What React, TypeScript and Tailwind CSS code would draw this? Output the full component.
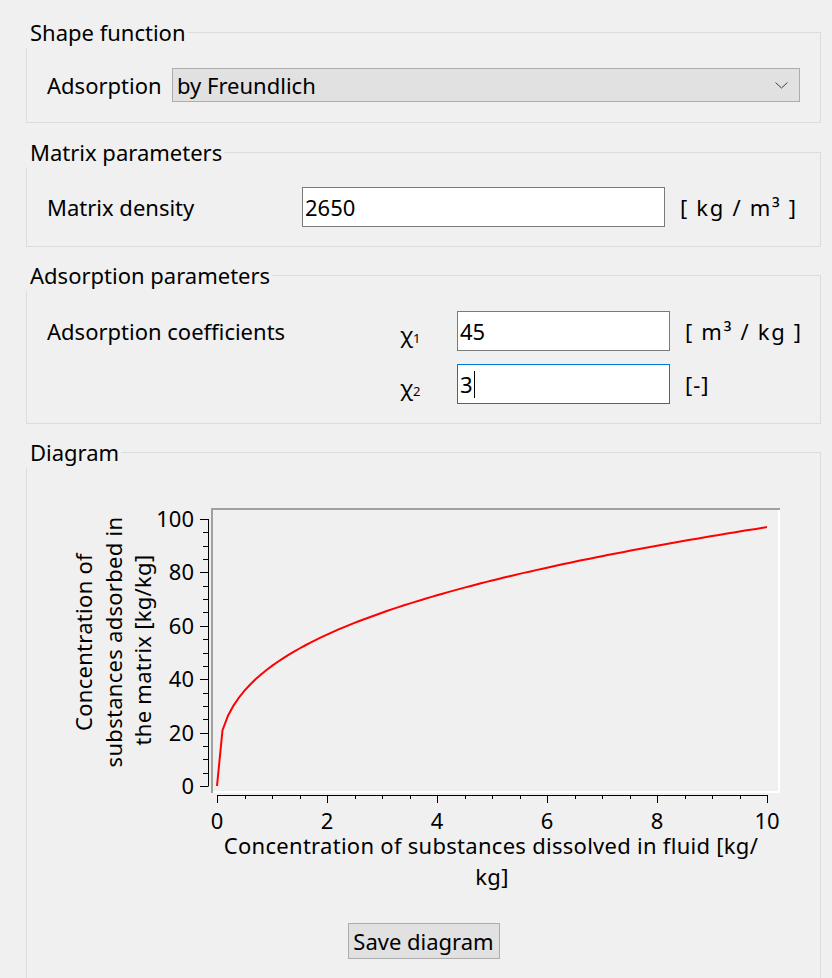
import React from "react";

// coordinates of the plot, in page pixels (the svg viewBox uses page coordinates)
const px = (c: number) => 217 + c * 55;
const py = (q: number) => 786 - q * 2.67;

function Group({ title, className = "", children }: { title: string; className?: string; children: React.ReactNode }) {
  return (
    <fieldset className={`border border-[#dcdcdc] ${className}`}>
      <legend className="-ml-px bg-[#f0f0f0] pl-[4px] pr-[2px] leading-8">{title}</legend>
      {children}
    </fieldset>
  );
}

function Chi({ n }: { n: number }) {
  return (
    <span className="flex items-baseline">
      <span>χ</span>
      <span className="text-[13px]">{n}</span>
    </span>
  );
}

function Diagram() {
  const points: string[] = [];
  for (let i = 0; i <= 100; i++) {
    const c = i / 10;
    points.push(`${px(c).toFixed(1)},${py(45 * Math.cbrt(c)).toFixed(1)}`);
  }

  const yTicks: number[] = [];
  for (let q = 0; q <= 100; q += 5) yTicks.push(q);
  const xTicks: number[] = [];
  for (let c = 0; c <= 10; c += 0.5) xTicks.push(c);

  return (
    <svg width="793" height="440" viewBox="27 468 793 440" className="block" fontFamily="'Noto Sans', sans-serif" fontSize="22">
      {/* sunken frame */}
      <rect x="211" y="508" width="569" height="2" fill="#a0a0a0" />
      <rect x="211" y="508" width="2" height="285" fill="#a0a0a0" />
      <rect x="778" y="510" width="2" height="283" fill="#ffffff" />
      <rect x="213" y="791" width="567" height="2" fill="#ffffff" />

      {/* y axis */}
      <line x1="208.5" y1={py(100)} x2="208.5" y2={py(0)} stroke="#000" strokeWidth="1" />
      {yTicks.map(q => (
        <line key={q} x1={q % 20 === 0 ? 200 : 203} y1={Math.round(py(q)) + 0.5} x2="208.5" y2={Math.round(py(q)) + 0.5} stroke="#000" strokeWidth="1" />
      ))}
      {[0, 20, 40, 60, 80, 100].map(q => (
        <text key={q} x="194" y={py(q) + 8} textAnchor="end" fill="#000">{q}</text>
      ))}

      {/* x axis */}
      <line x1={px(0)} y1="795.5" x2={px(10)} y2="795.5" stroke="#000" strokeWidth="1" />
      {xTicks.map(c => (
        <line key={c} x1={Math.round(px(c)) + 0.5} y1="795" x2={Math.round(px(c)) + 0.5} y2={c % 2 === 0 ? 803 : 799} stroke="#000" strokeWidth="1" />
      ))}
      {[0, 2, 4, 6, 8, 10].map(c => (
        <text key={c} x={px(c)} y="829" textAnchor="middle" fill="#000">{c}</text>
      ))}

      {/* curve */}
      <polyline points={points.join(" ")} fill="none" stroke="#ff0000" strokeWidth="2" />

      {/* axis titles */}
      <g letterSpacing="0.28">
        <text x="491" y="854" textAnchor="middle" fill="#000">Concentration of substances dissolved in fluid [kg/</text>
        <text x="492" y="885" textAnchor="middle" fill="#000">kg]</text>

        <text transform="translate(92,642) rotate(-90)" textAnchor="middle" fill="#000">Concentration of</text>
        <text transform="translate(122,642) rotate(-90)" textAnchor="middle" fill="#000">substances adsorbed in</text>
        <text transform="translate(151,650) rotate(-90)" textAnchor="middle" fill="#000">the matrix [kg/kg]</text>
      </g>
    </svg>
  );
}

export default function App() {
  return (
    <div className="h-[978px] overflow-hidden bg-[#f0f0f0] pt-4 pl-[26px] pr-[11px] font-['Noto_Sans',sans-serif] text-[22px] text-black">
      {/* Shape function */}
      <Group title="Shape function" className="pt-5 pb-5">
        <div className="flex items-center pl-5 pr-5">
          <div className="w-[125px] shrink-0">Adsorption</div>
          <div className="flex h-[34px] flex-1 items-center justify-between border border-[#adadad] bg-[#e1e1e1] pl-[4px] pr-[11px]">
            <span>by Freundlich</span>
            <svg width="13" height="7" viewBox="0 0 13 7">
              <polyline points="0.5,0.5 6.5,6 12.5,0.5" fill="none" stroke="#404040" strokeWidth="1" />
            </svg>
          </div>
        </div>
      </Group>

      {/* Matrix parameters */}
      <Group title="Matrix parameters" className="mt-[13px] pt-[19px] pb-[19px]">
        <div className="flex items-center pl-5">
          <div className="w-[255px] shrink-0">Matrix density</div>
          <div className="flex h-[40px] w-[363px] items-center border border-[#7a7a7a] bg-white pl-[2px]">2650</div>
          <div className="ml-[15px] tracking-[1.7px]">[ kg / m³ ]</div>
        </div>
      </Group>

      {/* Adsorption parameters */}
      <Group title="Adsorption parameters" className="mt-3 pt-5 pb-[19px]">
        <div className="grid grid-cols-[351px_59px_213px_auto] items-center gap-y-[13px] pl-5">
          <div>Adsorption coefficients</div>
          <div className="pl-[2px] pt-[7px]"><Chi n={1} /></div>
          <div className="flex h-[40px] items-center border border-[#7a7a7a] bg-white pl-[2px]">45</div>
          <div className="ml-[15px] tracking-[1.7px]">[ m³ / kg ]</div>

          <div />
          <div className="pl-[2px] pt-[7px]"><Chi n={2} /></div>
          <div className="flex h-[40px] items-center border border-[#0078d7] bg-white pl-[2px]">
            <span>3</span>
            <span className="ml-px h-[27px] w-px bg-black" />
          </div>
          <div className="ml-[15px] tracking-[1px]">[-]</div>
        </div>
      </Group>

      {/* Diagram */}
      <Group title="Diagram" className="mt-3 pb-10">
        <Diagram />
        <div className="mt-[15px] flex justify-center">
          <button className="h-[36px] w-[152px] whitespace-nowrap border border-[#adadad] bg-[#e1e1e1] leading-none">
            Save diagram
          </button>
        </div>
      </Group>
    </div>
  );
}
